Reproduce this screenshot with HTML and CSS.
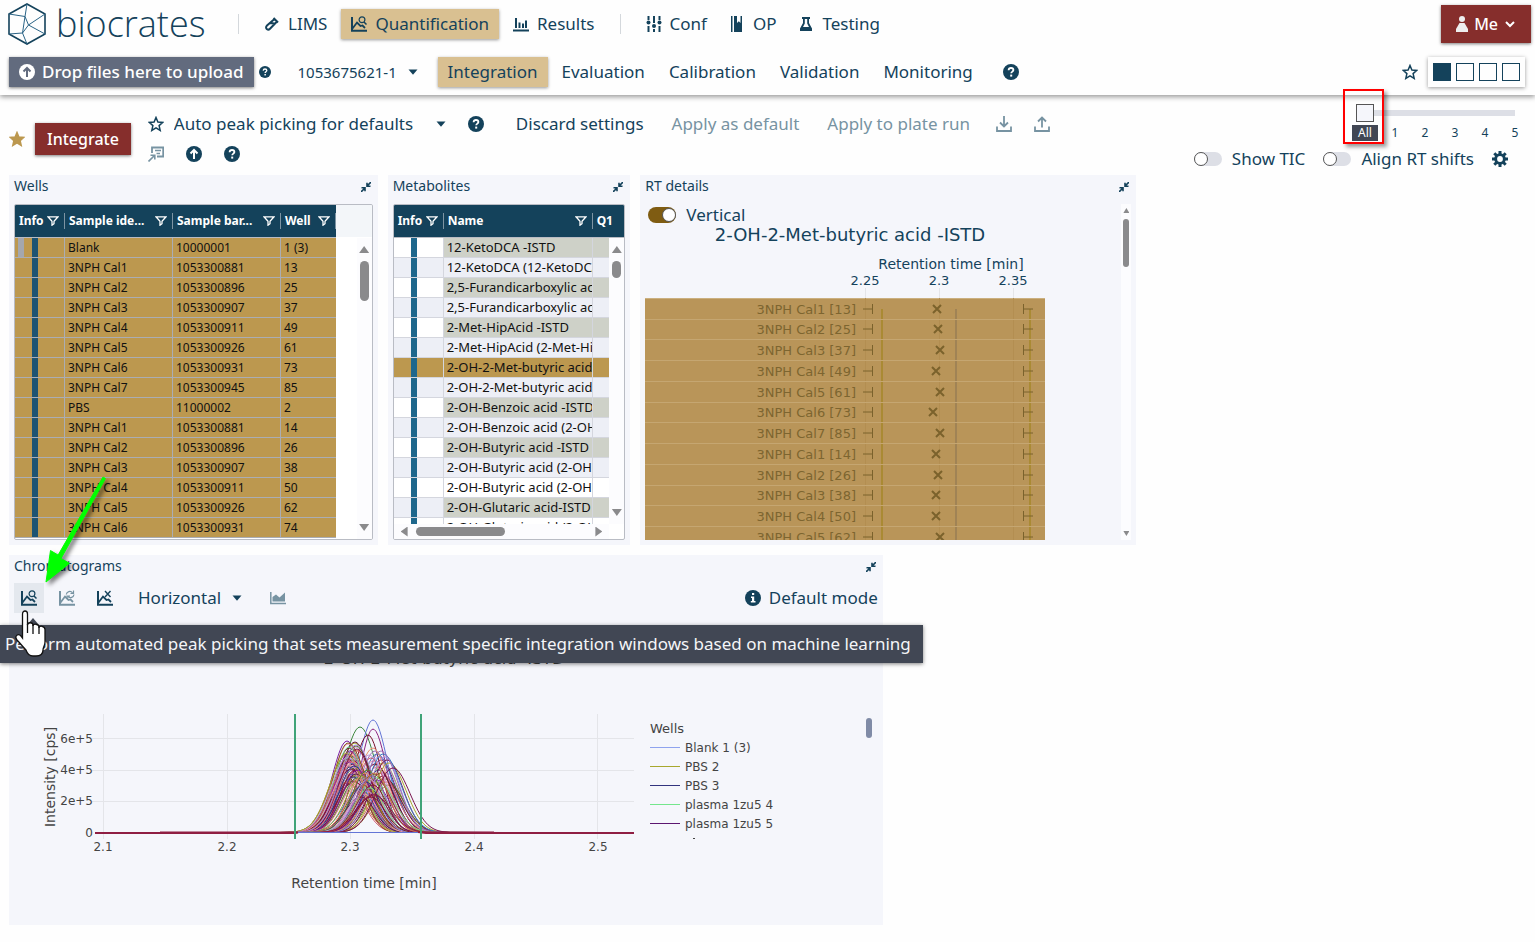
FILE: index.html
```
<!DOCTYPE html>
<html lang="en">

<head>
    <meta charset="UTF-8">
    <meta name="viewport" content="width=device-width, initial-scale=1.0">
    <title>biocrates - Quantification</title>
    <link rel="stylesheet" href="styles.css">
</head>

<body>
    <!-- Icon sprite -->
    <svg class="sprite" aria-hidden="true">
        <symbol id="i-help" viewBox="0 0 16 16">
            <circle cx="8" cy="8" r="8" fill="currentColor" />
            <path d="M5.6 6.2C5.7 4.7 6.7 4 8 4s2.4.8 2.4 2.1C10.400 7.600 8.200 7.700 8.200 9.300" fill="none" stroke="#fff" stroke-width="1.800" />
            <rect x="7.200" y="10.600" width="2" height="2" fill="#fff" />
        </symbol>
        <symbol id="i-up" viewBox="0 0 16 16">
            <circle cx="8" cy="8" r="8" fill="currentColor" />
            <path class="arrow" d="M8 13V4M4.500 7.500 8 4l3.500 3.500" fill="none" stroke="var(--hole, #fff)" stroke-width="2" />
        </symbol>
        <symbol id="i-info" viewBox="0 0 16 16">
            <circle cx="8" cy="8" r="8" fill="currentColor" />
            <path d="M7 3h2.200v2H7zM6 6.500h3.200V11H10.500v1.500H5.800V11H7V8H6z" fill="#fff" />
        </symbol>
        <symbol id="i-star" viewBox="0 0 16 16">
            <path d="M8 1.500 9.900 6l4.900.4-3.700 3.200 1.100 4.800L8 11.900l-4.200 2.500 1.100-4.800L1.200 6.400 6.100 6z" fill="var(--fill, none)" stroke="currentColor" stroke-width="1.500" />
        </symbol>
        <symbol id="i-caret" viewBox="0 0 10 6">
            <path d="M.500.500h9L5 5.800z" fill="currentColor" />
        </symbol>
        <symbol id="i-tube" viewBox="0 0 16 16">
            <path d="M9.500 2 14 6.500M10.500 3 3 9.500c-1.500 1.500-1 3 0 3.700s2 .5 3-.5L13 5.500M6 7l4.500.500" fill="none" stroke="currentColor" stroke-width="2" />
        </symbol>
        <symbol id="i-peak" viewBox="0 0 16 16">
            <path d="M1 1v13.700h15" fill="none" stroke="currentColor" stroke-width="2" />
            <path d="M1.500 12.500 6 6.500l3.500 3.500 2-.5 2.500 2.500" fill="none" stroke="currentColor" stroke-width="1.800" />
        </symbol>
        <symbol id="i-peak-search" viewBox="0 0 16 16">
            <use href="#i-peak" />
            <circle cx="11" cy="3.800" r="2.900" fill="none" stroke="currentColor" stroke-width="1.200" />
            <path d="m13 6 2.500 2.500" stroke="currentColor" stroke-width="1.500" />
        </symbol>
        <symbol id="i-peak-sync" viewBox="0 0 16 16">
            <use href="#i-peak" />
            <path d="M7.300 4.500A3.500 3.500 0 0 1 13.500 2.800M14.500.5v3h-3M15 4.500A3.500 3.500 0 0 1 9 6.500M8 9V6h3" fill="none" stroke="currentColor" stroke-width="1.200" />
        </symbol>
        <symbol id="i-peak-x" viewBox="0 0 16 16">
            <use href="#i-peak" />
            <path d="m8 1 5.500 6M13.500 1 8 7" stroke="currentColor" stroke-width="1.400" />
        </symbol>
        <symbol id="i-bars" viewBox="0 0 16 16">
            <path d="M0 14.500h16M3 2v10M6.500 6.500V12M10 7.500V12M13 4.500V12" fill="none" stroke="currentColor" stroke-width="2" />
        </symbol>
        <symbol id="i-area" viewBox="0 0 16 16">
            <path d="M.8 2v11.500H16" fill="none" stroke="currentColor" stroke-width="1.500" />
            <path d="M2.500 11.500V7L6 4.500 9.500 7.500 15 2.500v9z" fill="currentColor" />
        </symbol>
        <symbol id="i-sliders" viewBox="0 0 16 16">
            <path d="M2.500 0v4M2.500 10v6M8 0v7M8 13v3M13.500 0v4M13.500 10v6" stroke="currentColor" stroke-width="2" />
            <circle cx="2.500" cy="6.500" r="2" fill="currentColor" />
            <circle cx="8" cy="10" r="2" fill="currentColor" />
            <circle cx="13.500" cy="6.500" r="2" fill="currentColor" />
        </symbol>
        <symbol id="i-book" viewBox="0 0 16 16">
            <path d="M2 0h1.500v16H2zM5 0h3v7l1.800-1.700L11.500 7V0H13v16H5z" fill="currentColor" />
        </symbol>
        <symbol id="i-flask" viewBox="0 0 16 16">
            <path d="M4 1h8v2h-1v4l3 5.500V15H2v-2.500L5 7V3H4zM6.800 3v4.500L5 11h6L9.200 7.500V3z" fill="currentColor" fill-rule="evenodd" />
        </symbol>
        <symbol id="i-user" viewBox="0 0 12 16">
            <circle cx="6" cy="3" r="3" fill="#eee" />
            <path d="M3.500 7h5L12 13v3H0v-3z" fill="#eee" />
        </symbol>
        <symbol id="i-chevron" viewBox="0 0 12 12">
            <path d="m2 4 4 4 4-4" fill="none" stroke="currentColor" stroke-width="2" />
        </symbol>
        <symbol id="i-note" viewBox="0 0 16 16">
            <path d="M4 7V1.500h11.200v9H9" fill="none" stroke="currentColor" stroke-width="1.800" />
            <path d="M7 4.500h6M8.500 7.500H12M.5 15.500l6-6M2.500 9.200h4.300v4.300" fill="none" stroke="currentColor" stroke-width="1.600" />
        </symbol>
        <symbol id="i-download" viewBox="0 0 16 16">
            <path d="M1 10.500V15h14v-4.500M8 0v10M4 6.500l4 4 4-4" fill="none" stroke="currentColor" stroke-width="1.800" />
        </symbol>
        <symbol id="i-export" viewBox="0 0 16 16">
            <path d="M1 10.500V15h14v-4.500M8 11.500V1.500M4 5.500l4-4 4 4" fill="none" stroke="currentColor" stroke-width="1.800" />
        </symbol>
        <symbol id="i-gear" viewBox="0 0 16 16">
            <path d="M8 0v16M0 8h16M2.300 2.300l11.400 11.400M13.700 2.300 2.300 13.700" stroke="currentColor" stroke-width="3" />
            <circle cx="8" cy="8" r="5.800" fill="currentColor" />
            <circle cx="8" cy="8" r="2.900" fill="#fff" />
        </symbol>
        <symbol id="i-shrink" viewBox="0 0 10 10">
            <path d="M10 0 6.500 3.500M6 .800v3.400h3.500M0 10l3.500-3.500M4 9.200V5.800H.5" fill="none" stroke="currentColor" stroke-width="1.600" />
        </symbol>
        <symbol id="i-filter" viewBox="0 0 12 10">
            <path d="M1 .800h10L7 5.200v2.500L5 9.200v-4z" fill="none" stroke="currentColor" stroke-width="1.300" />
        </symbol>
    </svg>

    <header class="header">
        <div class="header-row">
            <a class="logo" href="#">
                <svg width="38" height="42" viewBox="0 0 38 42" fill="none" stroke="#14425b">
                    <path d="M19 1 37 11v20L19 41 1 31V11z" stroke-width="1.600" />
                    <path d="M1 11l16 2.500L19 1M17 13.500 20.500 22 37 11M20.500 22 37 31M20.500 22 14.500 30 1 31M17 13.500 14.500 30 19 41" stroke="#2b6486" />
                </svg>
                <span>biocrates</span>
            </a>
            <nav class="main-nav">
                <a class="nav-item" href="#"><svg class="icon"><use href="#i-tube" /></svg>LIMS</a>
                <a class="nav-item selected" href="#"><svg class="icon"><use href="#i-peak-search" /></svg>Quantification</a>
                <a class="nav-item" href="#"><svg class="icon"><use href="#i-bars" /></svg>Results</a>
            </nav>
            <nav class="main-nav">
                <a class="nav-item" href="#"><svg class="icon"><use href="#i-sliders" /></svg>Conf</a>
                <a class="nav-item" href="#"><svg class="icon"><use href="#i-book" /></svg>OP</a>
                <a class="nav-item" href="#"><svg class="icon"><use href="#i-flask" /></svg>Testing</a>
            </nav>
            <button class="btn btn-red btn-me" type="button">
                <svg width="12" height="16"><use href="#i-user" /></svg>Me<svg width="12" height="12"><use href="#i-chevron" /></svg>
            </button>
        </div>
        <div class="header-row header-sub">
            <button class="btn btn-upload" type="button"><svg class="icon"><use href="#i-up" /></svg>Drop files here to upload</button>
            <svg class="icon-small"><use href="#i-help" /></svg>
            <label class="picker picker-run">
                <select aria-label="Plate run">
                    <option>1053675621-1</option>
                </select>
                <svg class="caret"><use href="#i-caret" /></svg>
            </label>
            <nav class="sub-nav">
                <a class="nav-item selected" href="#">Integration</a>
                <a class="nav-item" href="#">Evaluation</a>
                <a class="nav-item" href="#">Calibration</a>
                <a class="nav-item" href="#">Validation</a>
                <a class="nav-item" href="#">Monitoring</a>
            </nav>
            <svg class="icon help-sub"><use href="#i-help" /></svg>
            <div class="layouts">
                <svg class="icon"><use href="#i-star" /></svg>
                <div class="layout-box">
                    <button class="layout on" type="button" aria-label="Layout 1"></button>
                    <button class="layout" type="button" aria-label="Layout 2"></button>
                    <button class="layout" type="button" aria-label="Layout 3"></button>
                    <button class="layout" type="button" aria-label="Layout 4"></button>
                </div>
            </div>
        </div>
    </header>

    <!-- Settings toolbar -->
    <section class="toolbar">
        <svg class="icon gold"><use href="#i-star" /></svg>
        <button class="btn btn-red btn-integrate" type="button">Integrate</button>
        <div class="settings">
            <div class="settings-row">
                <label class="picker picker-settings">
                    <svg class="icon"><use href="#i-star" /></svg>
                    <select aria-label="Integration settings">
                        <option>Auto peak picking for defaults</option>
                    </select>
                    <svg class="caret"><use href="#i-caret" /></svg>
                </label>
                <svg class="icon"><use href="#i-help" /></svg>
                <div class="actions">
                    <button class="link" type="button">Discard settings</button>
                    <button class="link" type="button" disabled>Apply as default</button>
                    <button class="link" type="button" disabled>Apply to plate run</button>
                </div>
                <button class="link" type="button" aria-label="Download" disabled><svg class="icon"><use href="#i-download" /></svg></button>
                <button class="link" type="button" aria-label="Export" disabled><svg class="icon"><use href="#i-export" /></svg></button>
            </div>
            <div class="settings-row">
                <svg class="icon muted"><use href="#i-note" /></svg>
                <svg class="icon"><use href="#i-up" /></svg>
                <svg class="icon"><use href="#i-help" /></svg>
            </div>
        </div>
        <div class="view-options">
            <div class="slider">
                <input type="range" min="0" max="5" value="0" aria-label="Level">
                <div class="slider-marks">
                    <span class="current">All</span><span>1</span><span>2</span><span>3</span><span>4</span><span>5</span>
                </div>
            </div>
            <div class="switches">
                <label class="switch"><input type="checkbox">Show TIC</label>
                <label class="switch"><input type="checkbox">Align RT shifts</label>
                <svg class="icon"><use href="#i-gear" /></svg>
            </div>
        </div>
    </section>

    <main class="panels">
        <section class="panel panel-wells">
            <h2>Wells <svg class="shrink"><use href="#i-shrink" /></svg></h2>
            <div class="grid">
                <div class="grid-view">
                    <table class="wells">
                        <thead>
                            <tr>
                                <th class="col-info"><div>Info<svg class="filter"><use href="#i-filter" /></svg></div></th>
                                <th class="col-sample"><div>Sample ide...<svg class="filter"><use href="#i-filter" /></svg></div></th>
                                <th class="col-sample"><div>Sample bar...<svg class="filter"><use href="#i-filter" /></svg></div></th>
                                <th class="col-well"><div>Well<svg class="filter"><use href="#i-filter" /></svg></div></th>
                            </tr>
                        </thead>
                        <tbody id="wellRows"></tbody>
                    </table>
                </div>
                <div class="scroll-v"><i class="tri up"></i><i class="thumb"></i><i class="tri down"></i></div>
            </div>
        </section>

        <section class="panel panel-metabolites">
            <h2>Metabolites <svg class="shrink"><use href="#i-shrink" /></svg></h2>
            <div class="grid">
                <div class="grid-view">
                    <table class="metabolites">
                        <thead>
                            <tr>
                                <th class="col-info"><div>Info<svg class="filter"><use href="#i-filter" /></svg></div></th>
                                <th class="col-name"><div>Name<svg class="filter"><use href="#i-filter" /></svg></div></th>
                                <th class="col-q1"><div>Q1</div></th>
                            </tr>
                        </thead>
                        <tbody id="metaboliteRows"></tbody>
                    </table>
                </div>
                <div class="scroll-v"><i class="tri up"></i><i class="thumb"></i><i class="tri down"></i></div>
                <div class="scroll-h"><i class="tri left"></i><i class="thumb"></i><i class="tri right"></i></div>
            </div>
        </section>

        <section class="panel panel-rt">
            <h2>RT details <svg class="shrink"><use href="#i-shrink" /></svg></h2>
            <div class="rt-body">
                <div class="rt-view">
                    <label class="switch"><input type="checkbox" checked>Vertical</label>
                    <svg id="rtChart" class="rt-chart" width="400" height="314" viewBox="646 226 400 314"></svg>
                </div>
                <div class="scroll-v"><i class="tri up"></i><i class="thumb"></i><i class="tri down"></i></div>
            </div>
        </section>

        <section class="panel panel-chrom">
            <h2>Chromatograms <svg class="shrink"><use href="#i-shrink" /></svg></h2>
            <div class="chrom-tools">
                <button class="tool hover" type="button" aria-label="Pick peaks"><svg class="icon"><use href="#i-peak-search" /></svg></button>
                <button class="tool" type="button" aria-label="Sync peaks" disabled><svg class="icon"><use href="#i-peak-sync" /></svg></button>
                <button class="tool" type="button" aria-label="Remove peaks"><svg class="icon"><use href="#i-peak-x" /></svg></button>
                <label class="picker picker-dir">
                    <select aria-label="Direction">
                        <option>Horizontal</option>
                    </select>
                    <svg class="caret"><use href="#i-caret" /></svg>
                </label>
                <button class="tool" type="button" aria-label="Fill area" disabled><svg class="icon"><use href="#i-area" /></svg></button>
                <span class="mode"><svg class="icon"><use href="#i-info" /></svg>Default mode</span>
            </div>
            <svg id="chromChart" class="chrom-chart" width="869" height="296" viewBox="14 629 869 296"></svg>
        </section>
    </main>

    <!-- Overlays -->
    <div class="tooltip" role="tooltip">Perform automated peak picking that sets measurement specific integration windows based on machine learning</div>
    <div class="mark-box"></div>
    <svg class="mark-arrow" width="76" height="120" viewBox="0 0 76 120">
        <path d="M64.500 7.500 20 87.500l8.500 4.800L5 111 9.500 79.500l7.600 4.600L62 6z" fill="#0f0" stroke="#0f0" />
    </svg>
    <svg class="hand" width="38" height="50" viewBox="0 0 38 50">
        <path d="M11.500 5c0-4 5-4 5 0v11c0-3 5.500-3 5.500 0v1c0-3 6-2 6 1v1c0-3 6-2 6 1.500V33c0 4-2 5-2 8 0 4-3 6-7 6h-3c-4 0-6-3-7-6-3-3-6-7-9-10-3-4 1-7 4-4l1.500 2z" fill="#fff" stroke="#111" stroke-width="1.300" />
        <path d="M16.500 15v9M22 16v9M28 18v7" stroke="#111" stroke-width="1.300" />
    </svg>

    <script src="script.js"></script>
</body>

</html>
```
FILE: styles.css
```
/* Basic Styles */
:root {
    --blue: #14425b;
    --gold: #bc984f;
    --sand: #d9c091;
    --red: #862e2c;
    --panel: #f5f6fb;
}

* {
    box-sizing: border-box;
}

body {
    margin: 0;
    font-family: "Noto Sans", sans-serif;
    font-size: 17px;
    line-height: 20px;
    color: var(--blue);
    background-color: #fefefe;
}

button,
select,
input {
    font: inherit;
    color: inherit;
    margin: 0;
}

a {
    color: inherit;
    text-decoration: none;
}

svg {
    flex: none;
}

.sprite {
    position: absolute;
    width: 0;
    height: 0;
}

.icon {
    width: 16px;
    height: 16px;
}

.icon-small {
    width: 12px;
    height: 12px;
}

.caret {
    width: 10px;
    height: 6px;
}

.gold {
    color: var(--gold);
    --fill: var(--gold);
}

.muted {
    color: #7793a2;
}

/* Header */
.header {
    height: 95px;
    background-color: #fefefe;
    box-shadow: 0 2px 5px rgba(0, 0, 0, 0.4);
}

.header-row {
    display: flex;
    align-items: center;
    height: 48px;
    padding: 0 4px 0 8px;
}

.header-sub {
    padding: 0 10px 0 9px;
}

.logo {
    display: flex;
    align-items: center;
    gap: 10px;
    width: 231px;
    height: 20px;
    border-right: 1px solid #d4d8dc;
    font: 300 36px/40px "Open Sans", sans-serif;
}

.main-nav {
    display: flex;
    gap: 4px;
    padding-left: 15px;
}

.main-nav + .main-nav {
    margin-left: 15px;
    border-left: 1px solid #d4d8dc;
    height: 20px;
    align-items: center;
    gap: 2px;
}

.nav-item {
    display: flex;
    align-items: center;
    gap: 8px;
    height: 30px;
    padding: 0 10px;
}

.nav-item.selected {
    background-color: var(--sand);
    box-shadow: 0 1px 3px rgba(0, 0, 0, 0.4);
}

.btn {
    display: flex;
    align-items: center;
    border: none;
    color: #fff;
    font-weight: 500;
    box-shadow: 0 1px 3px rgba(0, 0, 0, 0.5);
    cursor: pointer;
}

.btn-red {
    font-size: 16px;
    background-color: var(--red);
}

.btn-me {
    gap: 6px;
    height: 38px;
    padding: 0 15px;
    margin-left: auto;
}

.btn-upload {
    gap: 7px;
    height: 30px;
    padding: 0 10px;
    background-color: #626b7e;
    --hole: #626b7e;
    margin-right: 5px;
}

.picker {
    display: flex;
    align-items: center;
    gap: 10px;
}

.picker select {
    appearance: none;
    border: none;
    padding: 0;
    background: none;
}

.picker-run {
    margin: 0 20px 0 27px;
    font-size: 15px;
}

.sub-nav {
    display: flex;
    gap: 4px;
}

.help-sub {
    margin-left: 20px;
}

.layouts {
    display: flex;
    align-items: center;
    gap: 10px;
    margin-left: auto;
}

.layout-box {
    display: flex;
    align-items: center;
    gap: 5px;
    height: 30px;
    padding: 0 5px;
    box-shadow: 0 1px 4px rgba(0, 0, 0, 0.4);
}

.layout {
    width: 18px;
    height: 18px;
    padding: 0;
    border: 1px solid var(--blue);
    background: none;
}

.layout.on {
    background-color: var(--blue);
}

/* Toolbar */
.toolbar {
    display: flex;
    align-items: center;
    height: 80px;
    padding: 8px 5px 0 9px;
}

.btn-integrate {
    height: 32px;
    padding: 0 12px;
    margin: 0 17px 0 10px;
}

.settings-row {
    display: flex;
    align-items: center;
    gap: 22px;
    height: 30px;
}

.picker-settings select {
    margin-right: 12px;
}

.actions {
    display: flex;
    gap: 28px;
    padding: 0 4px 0 10px;
}

.link {
    display: flex;
    padding: 0;
    border: none;
    background: none;
}

.link:disabled {
    color: #7793a2;
}

.view-options {
    margin-left: auto;
}

.slider {
    width: 180px;
    margin-left: auto;
}

.slider input {
    display: block;
    appearance: none;
    width: 159px;
    height: 18px;
    margin-left: 6px;
    background: linear-gradient(#dddfe6, #dddfe6) center / 100% 6px no-repeat;
}

.slider input::-webkit-slider-thumb {
    appearance: none;
    width: 18px;
    height: 18px;
    border: 1px solid #555;
    background-color: #f5f6fb;
}

.slider-marks {
    display: flex;
    margin: 3px 0 2px;
    font-size: 12px;
    line-height: 16px;
}

.slider-marks span {
    width: 30px;
    text-align: center;
}

.slider-marks .current {
    width: 26px;
    margin: 0 2px;
    color: #fff;
    background-color: #414754;
}

.switches {
    display: flex;
    align-items: center;
    justify-content: flex-end;
    gap: 18px;
    height: 32px;
    padding: 0 22px 0 0;
}

.switch {
    display: flex;
    align-items: center;
    gap: 10px;
}

.switch input {
    display: flex;
    align-items: center;
    appearance: none;
    width: 28px;
    height: 14px;
    border-radius: 8px;
    background-color: #dddfe6;
}

.switch input::before {
    content: "";
    width: 14px;
    height: 14px;
    border: 1px solid #555;
    border-radius: 50%;
    background-color: #fff;
    box-sizing: border-box;
}

.switch input:checked {
    height: 16px;
    background-color: #7f5c12;
    justify-content: flex-end;
}

/* Panels */
.panels {
    display: flex;
    flex-wrap: wrap;
    gap: 10px;
    padding: 0 9px;
}

.panel {
    height: 370px;
    padding: 0 5px;
    background-color: var(--panel);
    overflow: hidden;
}

.panel-wells {
    width: 24.3%;
}

.panel-metabolites {
    width: 16%;
}

.panel-rt {
    width: 32.7%;
}

.panel-chrom {
    width: 57.6%;
}

.panel h2 {
    display: flex;
    align-items: center;
    justify-content: space-between;
    height: 22px;
    margin: 0;
    font-size: 14px;
    font-weight: 400;
}

.shrink {
    width: 10px;
    height: 10px;
    margin: 2px 2px 0;
}

/* Data tables */
.grid {
    position: relative;
    height: 336px;
    margin-top: 7px;
    border: 1px solid #b9bcc4;
    border-radius: 2px;
    background-color: #fff;
    overflow: hidden;
}

.grid-view {
    height: 334px;
    overflow: hidden;
    background: linear-gradient(#f3f6f9, #f3f6f9) top / 100% 32px no-repeat;
}

.panel-metabolites .grid-view {
    height: 319px;
}

.grid table {
    border-collapse: separate;
    border-spacing: 0;
    table-layout: fixed;
    font-size: 12px;
    color: #111;
}

.wells {
    width: 321px;
}

.metabolites {
    width: 232px;
}

.col-info {
    width: 50px;
}

.col-sample {
    width: 108px;
}

.col-name {
    width: 149px;
}

.grid th {
    height: 33px;
    padding: 0;
    color: #fff;
    background-color: var(--blue);
    border-bottom: 1px solid #b9bcc4;
}

.grid th div {
    display: flex;
    align-items: center;
    justify-content: space-between;
    height: 16px;
    padding: 0 5px 0 4px;
    border-right: 1px solid #7d94a3;
}

.metabolites .col-q1 div {
    border: none;
}

.filter {
    width: 12px;
    height: 10px;
}

.grid td {
    height: 20px;
    padding: 0 3px;
    line-height: 19px;
    border-bottom: 1px solid #d4d6de;
    border-right: 1px solid #d4d6de;
    white-space: nowrap;
    overflow: hidden;
}

.metabolites td {
    font-size: 13px;
}

.wells td {
    background-color: var(--gold);
    border-color: #abadb3;
}

.wells td:last-child {
    border-right: none;
}

.grid td.info {
    background-image: linear-gradient(#1e678c, #1e678c);
    background-position: 17px 0;
    background-size: 6px 100%;
    background-repeat: no-repeat;
    background-origin: border-box;
}

.wells td.info {
    background-image: linear-gradient(#1d5472, #1d5472);
}

.wells tr:first-child td.info {
    background-image: linear-gradient(#1d5472, #1d5472), linear-gradient(#a4a7ae, #a4a7ae);
    background-position: 17px 0, 3px 0;
}

.metabolites .alt td {
    background-color: #edeff6;
}

.metabolites .istd td:not(.info) {
    background-color: #ced1c8;
}

.metabolites .picked td,
.metabolites .picked td:not(.info) {
    background-color: var(--gold);
}

/* Scrollbars */
.scroll-v,
.scroll-h {
    position: absolute;
    display: flex;
    align-items: center;
    background-color: #fcfcfe;
}

.scroll-v {
    right: 0;
    top: 33px;
    bottom: 0;
    width: 15px;
    padding: 8px 0;
    flex-direction: column;
}

.scroll-h {
    left: 0;
    right: 15px;
    bottom: 0;
    height: 15px;
    padding: 0 7px;
}

.panel-metabolites .scroll-v {
    bottom: 15px;
}

.thumb {
    width: 9px;
    height: 40px;
    margin: 8px 0 auto;
    border-radius: 5px;
    background-color: #8a8a8c;
}

.panel-metabolites .scroll-v .thumb {
    height: 17px;
}

.scroll-h .thumb {
    width: 89px;
    height: 9px;
    margin: 0 auto 0 8px;
}

.tri {
    width: 10px;
    height: 7px;
    background-color: #8a8a8c;
    clip-path: polygon(50% 0, 100% 100%, 0 100%);
}

.tri.down {
    clip-path: polygon(0 0, 100% 0, 50% 100%);
}

.tri.left,
.tri.right {
    width: 7px;
    height: 10px;
    clip-path: polygon(100% 0, 100% 100%, 0 50%);
}

.tri.right {
    clip-path: polygon(0 0, 100% 50%, 0 100%);
}

/* RT details */
.rt-body {
    position: relative;
    margin-top: 7px;
}

.rt-view {
    height: 336px;
    overflow: hidden;
}

.rt-view .switch {
    height: 22px;
    padding-left: 3px;
}

.rt-chart {
    display: block;
}

.rt-body .scroll-v {
    top: 0;
    width: 10px;
    padding: 4px 0;
}

.rt-body .tri {
    width: 6px;
    height: 5px;
}

.rt-body .thumb {
    width: 6px;
    height: 48px;
    margin-top: 6px;
}

.rt-chart text,
.chrom-chart text {
    font-family: "DejaVu Sans", sans-serif;
}

/* Chromatograms */
.chrom-tools {
    display: flex;
    align-items: center;
    gap: 8px;
    height: 42px;
    margin: 0 0 10px;
}

.tool {
    display: flex;
    align-items: center;
    justify-content: center;
    width: 30px;
    height: 30px;
    padding: 0;
    border: none;
    background: none;
}

.tool.hover {
    background-color: #e4e8ee;
}

.tool:disabled {
    color: #7793a2;
}

.picker-dir {
    margin: 0 13px 0 10px;
}

.mode {
    display: flex;
    align-items: center;
    gap: 8px;
    margin-left: auto;
}

.chrom-chart {
    display: block;
}

/* Overlays */
.tooltip {
    position: absolute;
    left: 0;
    top: 625px;
    padding: 9px 12px 9px 5px;
    color: #f4f5f8;
    background-color: #414754;
    box-shadow: 0 1px 4px rgba(0, 0, 0, 0.5);
    white-space: nowrap;
}

.tooltip::before {
    content: "";
    position: absolute;
    left: 27px;
    top: -7px;
    border: 6px solid transparent;
    border-top: none;
    border-bottom: 7px solid #414754;
}

.mark-box {
    position: absolute;
    right: 151px;
    top: 89px;
    width: 41px;
    height: 55px;
    border: 2px solid #f00;
    box-shadow: 3px 3px 4px rgba(0, 0, 0, 0.4);
}

.mark-arrow {
    position: absolute;
    left: 41px;
    top: 471px;
    filter: drop-shadow(3px 3px 2px rgba(0, 0, 0, 0.5));
}

.hand {
    position: absolute;
    left: 11px;
    top: 609px;
}
```
FILE: script.js
```
const wells = [
    ["Blank", "10000001", "1 (3)"],
    ["3NPH Cal1", "1053300881", "13"],
    ["3NPH Cal2", "1053300896", "25"],
    ["3NPH Cal3", "1053300907", "37"],
    ["3NPH Cal4", "1053300911", "49"],
    ["3NPH Cal5", "1053300926", "61"],
    ["3NPH Cal6", "1053300931", "73"],
    ["3NPH Cal7", "1053300945", "85"],
    ["PBS", "11000002", "2"],
    ["3NPH Cal1", "1053300881", "14"],
    ["3NPH Cal2", "1053300896", "26"],
    ["3NPH Cal3", "1053300907", "38"],
    ["3NPH Cal4", "1053300911", "50"],
    ["3NPH Cal5", "1053300926", "62"],
    ["3NPH Cal6", "1053300931", "74"]
];

document.getElementById("wellRows").innerHTML = wells.map(w =>
    `<tr><td class="info"></td><td>${w[0]}</td><td>${w[1]}</td><td>${w[2]}</td></tr>`
).join("");

const metabolites = [
    ["12-KetoDCA -ISTD", "istd"],
    ["12-KetoDCA (12-KetoDCA)", "alt"],
    ["2,5-Furandicarboxylic acid -ISTD", "istd"],
    ["2,5-Furandicarboxylic acid", "alt"],
    ["2-Met-HipAcid -ISTD", "istd"],
    ["2-Met-HipAcid (2-Met-HipAcid)", "alt"],
    ["2-OH-2-Met-butyric acid -ISTD", "picked"],
    ["2-OH-2-Met-butyric acid", "alt"],
    ["2-OH-Benzoic acid -ISTD", "istd"],
    ["2-OH-Benzoic acid (2-OH-Benz)", "alt"],
    ["2-OH-Butyric acid -ISTD", "istd"],
    ["2-OH-Butyric acid (2-OH-But)", "alt"],
    ["2-OH-Butyric acid (2-OH-But)", ""],
    ["2-OH-Glutaric acid-ISTD", "alt istd"],
    ["2-OH-Glutaric acid (2-OH-Glut)", ""]
];

document.getElementById("metaboliteRows").innerHTML = metabolites.map(m =>
    `<tr class="${m[1]}"><td class="info"></td><td>${m[0]}</td><td></td></tr>`
).join("");

// RT details chart
function drawRt() {
    const peaks = [938, 939, 941, 937, 941, 934, 941, 937, 939, 937, 937, 941];
    const rows = wells.filter(w => w[0].startsWith("3NPH"));
    let s = `<g fill="#14425b">
        <text x="851" y="241" font-size="18" text-anchor="middle">2-OH-2-Met-butyric acid -ISTD</text>
        <text x="952" y="269" font-size="14" text-anchor="middle">Retention time [min]</text>`;
    [[866, "2.25"], [940, "2.3"], [1014, "2.35"]].forEach(t => {
        s += `<text x="${t[0]}" y="285" font-size="13" text-anchor="middle">${t[1]}</text>`;
    });
    s += `</g><path d="M866.500 288v10M940.500 288v10M1014.500 288v10" stroke="#e4e5e9"/>
        <rect x="646" y="298" width="400" height="242" fill="#b99559"/>
        <path d="M646 298.500h400" stroke="#cbb07f"/>
        <path d="M866.500 298v242M940.500 298v242M1014.500 298v242" stroke="#b38e51"/>
        <path d="M883 309v231M1031 309v231" stroke="#aa8a34" stroke-width="2"/>
        <path d="M957 309v231" stroke="#a08355" stroke-width="2"/>`;
    peaks.forEach((x, i) => {
        const y = Math.round(308.500 + i * 20.750);
        const w = rows[i];
        s += `<path d="M646 ${y + 10.500}h400" stroke="#c5a671"/>
            <text x="857" y="${y + 5}" font-size="13" text-anchor="end" fill="#7d6530">${w[0]} [${w[2]}]</text>
            <path d="M864 ${y}h10M873.500 ${y - 5}v10M1024.500 ${y - 5}v10M1024 ${y}h10" stroke="#7b622c"/>
            <path d="M${x - 4} ${y - 4}l8 8m0-8l-8 8" stroke="#7b622c" stroke-width="2"/>`;
    });
    document.getElementById("rtChart").innerHTML = s;
}

// Chromatogram chart
function curve(center, top, left, right, color) {
    let d = "M95 833";
    for (let x = 270; x <= 450; x += 2) {
        const sigma = x < center ? left : right;
        const y = 832.500 - (832.500 - top) * Math.exp(-((x - center) ** 2) / (2 * sigma * sigma));
        d += `L${x} ${y.toFixed(1)}`;
    }
    return `<path d="${d}L634 833" stroke="${color}"/>`;
}

function drawChrom() {
    const colors = ["#7b1fa2", "#a8a82e", "#32347e", "#74dc8c", "#7a1550", "#e07a8b", "#8b5a1c", "#a48be0",
        "#7a0f2b", "#c96f4a", "#3b7fc4", "#e89ab8", "#5c7a2c", "#9a6fb8", "#d3566f", "#5f1b3d", "#e8906c", "#c9a0dc", "#8a1538"];
    let s = `<path d="M103.500 714v125M227.500 714v125M350.500 714v125M474.500 714v125M597.500 714v125M92 801.500h542M92 770.500h542M92 738.500h542" stroke="#e4e5e9"/>
        <g fill="none" stroke-width="1">`;
    s += curve(360, 727, 17, 17, "#3c873c");
    s += curve(373, 720, 15, 15, "#6375d6");
    s += curve(373, 729, 13, 14, "#8d267f");
    s += curve(368, 735, 15, 14, "#78122d");
    for (let i = 0; i < 84; i++) {
        const leftGroup = i % 3 !== 1;
        const spread = (i * 7) % 11;
        const center = leftGroup ? 347 + spread : 369 + spread * 2;
        const top = leftGroup ? 741 + (i * 13) % 43 : 745 + (i * 11) % 35 + spread;
        s += curve(center, top, 15 + i % 3, 15 + i % 4, colors[i % colors.length]);
    }
    for (let i = 0; i < 18; i++) {
        s += curve(358 + i, 770 + (i * 9) % 30, 16, 14, colors[(i * 5) % colors.length]);
    }
    s += curve(393, 768, 17, 17, "#7a1550");
    s += curve(374, 795, 17, 17, "#8d1743");
    s += `<path d="M290 832.500h132" stroke="#6375d6"/>
        <path d="M95 833h200l3-.5M418 832l8 1h208" stroke="#8f1e42" stroke-width="2"/>
        <path d="M160 832h138M424 832h70" stroke="#8f1e42"/>
        <path d="M295 714v125M421 714v125" stroke="#3fa378" stroke-width="2"/></g>
        <g fill="#444">
        <text x="444" y="664" font-size="16" text-anchor="middle">2-OH-2-Met-butyric acid -ISTD</text>
        <text x="364" y="888" font-size="14" text-anchor="middle">Retention time [min]</text>
        <text transform="translate(55 777) rotate(-90)" font-size="14" text-anchor="middle">Intensity [cps]</text>`;
    [[103, "2.1"], [227, "2.2"], [350, "2.3"], [474, "2.4"], [598, "2.5"]].forEach(t => {
        s += `<text x="${t[0]}" y="851" font-size="12" text-anchor="middle">${t[1]}</text>`;
    });
    [[743, "6e+5"], [774, "4e+5"], [805, "2e+5"], [837, "0"]].forEach(t => {
        s += `<text x="93" y="${t[0]}" font-size="12" text-anchor="end">${t[1]}</text>`;
    });
    s += `<text x="650" y="733" font-size="13">Wells</text>`;
    const legend = [["Blank 1 (3)", "#8fa3ee"], ["PBS 2", "#a8a82e"], ["PBS 3", "#32347e"],
        ["plasma 1zu5 4", "#74e68c"], ["plasma 1zu5 5", "#5c1670"]];
    legend.forEach((l, i) => {
        const y = 747.500 + i * 19;
        s += `<text x="685" y="${y + 4}" font-size="12">${l[0]}</text><path d="M650 ${y}h30" stroke="${l[1]}"/>`;
    });
    // next legend entry, scrolled out except for its top edge
    s += `<path d="M693 838.500h2" stroke="#444"/>`;
    s += `</g><rect x="866" y="718" width="6" height="20" rx="3" fill="#808ba6"/>`;
    document.getElementById("chromChart").innerHTML = s;
}

drawRt();
drawChrom();
```
